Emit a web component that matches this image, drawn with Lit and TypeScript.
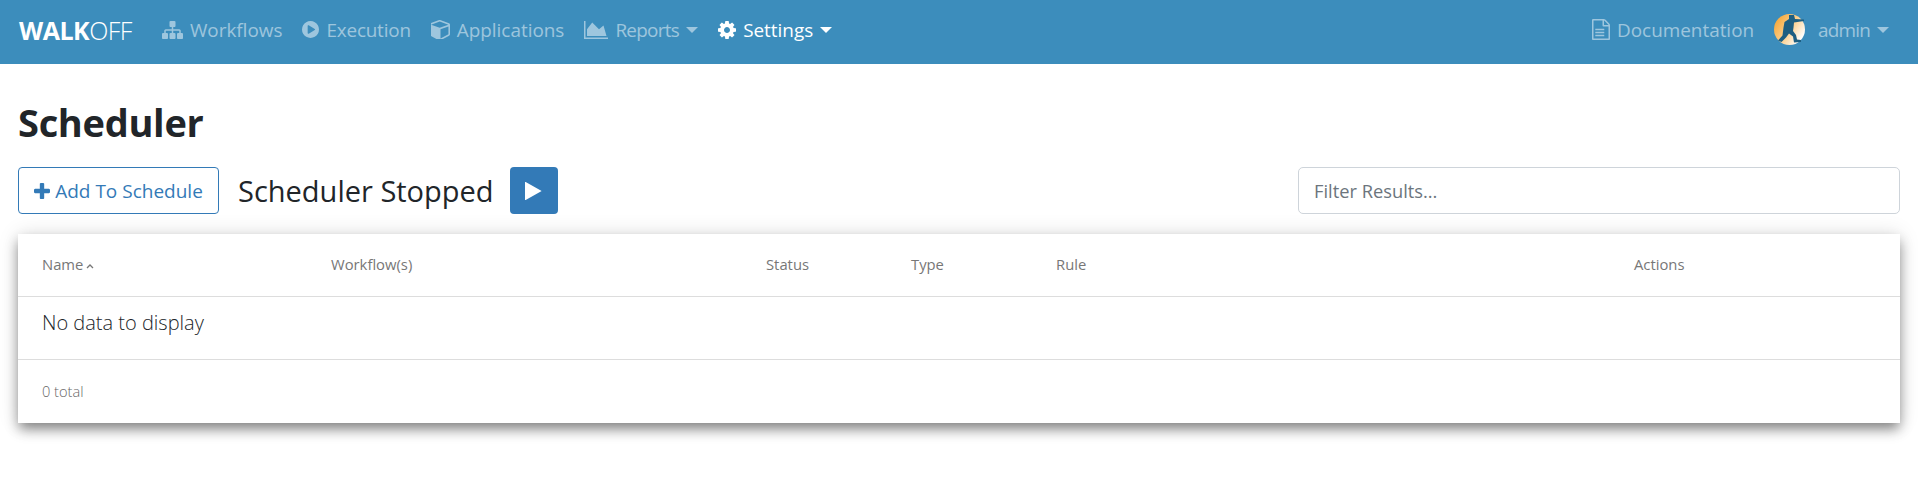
import { LitElement, css, html, svg } from 'lit'
import { customElement } from 'lit/decorators.js'

// viewBox is cropped to the glyph so the css height gives the drawn size
const icon = (box: string, d: string, height: number) => html`<svg class="ico" viewBox=${box} style="height:${height}px" fill="currentColor"><path d=${d}></path></svg>`

const sitemap = 'M1792 1248v320q0 40-28 68t-68 28h-320q-40 0-68-28t-28-68v-320q0-40 28-68t68-28h96v-192h-512v192h96q40 0 68 28t28 68v320q0 40-28 68t-68 28h-320q-40 0-68-28t-28-68v-320q0-40 28-68t68-28h96v-192h-512v192h96q40 0 68 28t28 68v320q0 40-28 68t-68 28h-320q-40 0-68-28t-28-68v-320q0-40 28-68t68-28h96v-192q0-52 38-90t90-38h512v-192h-96q-40 0-68-28t-28-68v-320q0-40 28-68t68-28h320q40 0 68 28t28 68v320q0 40-28 68t-68 28h-96v192h512q52 0 90 38t38 90v192h96q40 0 68 28t28 68z'
const playCircle = 'M896 128q209 0 385.5 103t279.5 279.5 103 385.5-103 385.5-279.5 279.5-385.5 103-385.5-103-279.5-279.5-103-385.5 103-385.5 279.5-279.5 385.5-103zm384 823q32-18 32-55t-32-55l-544-320q-31-19-64-1-32 19-32 56v640q0 37 32 56 16 8 32 8 17 0 32-9z'
const cube = 'M896 1629l640-349v-636l-640 233v752zm-64-865l698-254-698-254-698 254zm832-252v768q0 35-18 65t-49 47l-704 384q-28 16-61 16t-61-16l-704-384q-31-17-49-47t-18-65v-768q0-40 23-73t61-47l704-256q22-8 44-8t44 8l704 256q38 14 61 47t23 73z'
const areaChart = 'M2048 1536v128h-2048v-1536h128v1408h1920zm-384-1024l256 896h-1664v-576l448-576 576 576z'
const cog = 'M1152 896q0-106-75-181t-181-75-181 75-75 181 75 181 181 75 181-75 75-181zm512-109v222q0 12-8 23t-20 13l-185 28q-19 54-39 91 35 50 107 138 10 12 10 25t-9 23q-27 37-99 108t-94 71q-12 0-26-9l-138-108q-44 23-91 38-16 136-29 186-7 28-36 28h-222q-14 0-24.500-8.500t-11.500-21.500l-28-184q-49-16-90-37l-141 107q-10 9-25 9-14 0-25-11-126-114-165-168-7-10-7-23 0-12 8-23 15-21 51-66.500t54-70.500q-27-50-41-99l-183-27q-13-2-21-12.500t-8-23.500v-222q0-12 8-23t19-13l186-28q14-46 39-92-40-57-107-138-10-12-10-24 0-10 9-23 26-36 98.500-107.500t94.500-71.500q13 0 26 10l138 107q44-23 91-38 16-136 29-186 7-28 36-28h222q14 0 24.500 8.500t11.500 21.500l28 184q49 16 90 37l142-107q9-9 24-9 13 0 25 10 129 119 165 170 7 8 7 22 0 12-8 23-15 21-51 66.500t-54 70.500q26 50 41 98l183 28q13 2 21 12.500t8 23.500z'
const fileText = 'M1596 380q28 28 48 76t20 88v1152q0 40-28 68t-68 28h-1344q-40 0-68-28t-28-68v-1600q0-40 28-68t68-28h896q40 0 88 20t76 48zm-444-244v376h376q-10-29-22-41l-313-313q-12-12-41-22zm384 1528v-1024h-416q-40 0-68-28t-28-68v-416h-768v1536h1280zm-1128-800q0-14 9-23t23-9h704q14 0 23 9t9 23v64q0 14-9 23t-23 9h-704q-14 0-23-9t-9-23v-64zm736 224q14 0 23 9t9 23v64q0 14-9 23t-23 9h-704q-14 0-23-9t-9-23v-64q0-14 9-23t23-9h704zm0 256q14 0 23 9t9 23v64q0 14-9 23t-23 9h-704q-14 0-23-9t-9-23v-64q0-14 9-23t23-9h704z'
const plus = 'M1600 736v192q0 40-28 68t-68 28h-416v416q0 40-28 68t-68 28h-192q-40 0-68-28t-28-68v-416h-416q-40 0-68-28t-28-68v-192q0-40 28-68t68-28h416v-416q0-40 28-68t68-28h192q40 0 68 28t28 68v416h416q40 0 68 28t28 68z'
const play = 'M1576 927l-1328 738q-23 13-39.500 3t-16.500-36v-1472q0-26 16.500-36t39.500 3l1328 738q23 13 23 31t-23 31z'

const avatar = html`<svg class="avatar" viewBox="0 0 31 31">
  <defs>
    <linearGradient id="sky" x1="0.05" y1="0.2" x2="0.95" y2="0.8">
      <stop offset="0" stop-color="#f6a93b"></stop>
      <stop offset="0.5" stop-color="#fcd08f"></stop>
      <stop offset="0.95" stop-color="#ffffff"></stop>
    </linearGradient>
  </defs>
  <circle cx="15.5" cy="15.5" r="15.5" fill="url(#sky)"></circle>
  ${svg`<path fill="#1e5f82" d="M15 1l5 0 1 4 9 .5 0 1.500-10 1.500-.5 5-.5 3.500 3 4 1 4.500 4 .5 0 2-7 .5-1-6-4-3-3 4-4.500 4.500-3.500-1.500 4.500-5 1-8 1-5.500 4.500-3z"></path>`}
</svg>`

@customElement('app-root')
export class AppRoot extends LitElement {
  static styles = css`
  :host {
    display: block;
    font-family: 'Open Sans', 'Noto Sans', sans-serif;
    color: #212529;
  }

  .navbar {
    display: flex;
    align-items: center;
    height: 64px;
    box-sizing: border-box;
    padding: 0 29px 5px 19px;
    background: #3c8dbc;
    font-size: 18.9px;
  }

  .brand {
    color: #fff;
    font-size: 25px;
    margin-right: 30px;
    letter-spacing: -0.5px;
  }

  .brand b {
    font-weight: 700;
  }

  .brand span {
    font-weight: 300;
  }

  .nav-link {
    display: flex;
    align-items: center;
    gap: 7px;
    margin-right: 20px;
    color: rgba(255, 255, 255, .5);
    white-space: nowrap;
  }

  .nav-link.execution {
    letter-spacing: -0.2px;
  }

  .nav-link.reports {
    letter-spacing: -0.7px;
  }

  .nav-link.user {
    margin-right: 0;
    letter-spacing: -0.8px;
  }

  .nav-link.active {
    color: #fff;
  }

  .ico {
    display: block;
    width: auto;
    flex: none;
  }

  .caret {
    width: 0;
    height: 0;
    border-top: 6px solid currentColor;
    border-left: 6px solid transparent;
    border-right: 6px solid transparent;
  }

  .spacer {
    flex: 1;
  }

  .avatar {
    width: 31px;
    height: 31px;
    display: block;
    margin-right: 6px;
    margin-top: -1px;
  }

  .page {
    padding: 0 18px 69px;
  }

  h1 {
    margin: 0;
    padding-top: 32px;
    font-size: 38px;
    line-height: 52px;
    font-weight: 700;
    letter-spacing: -0.3px;
  }

  .toolbar {
    display: flex;
    align-items: center;
    margin-top: 19px;
    height: 47px;
  }

  .add-btn {
    display: flex;
    align-items: center;
    justify-content: center;
    gap: 5px;
    width: 201px;
    height: 47px;
    box-sizing: border-box;
    border: 1px solid #337ab7;
    border-radius: 4px;
    background: #fff;
    color: #337ab7;
    font: inherit;
    font-size: 19px;
    padding: 0;
  }

  .status {
    margin-left: 19px;
    font-size: 29px;
  }

  .play-btn {
    display: flex;
    align-items: center;
    justify-content: center;
    width: 48px;
    height: 47px;
    margin-left: 16px;
    border: 0;
    padding: 0;
    border-radius: 4px;
    background: #337ab7;
    color: #fff;
  }

  .filter {
    margin-left: auto;
    width: 602px;
    height: 47px;
    box-sizing: border-box;
    border: 1px solid #ced4da;
    border-radius: 5px;
    padding: 0 15px;
    font: inherit;
    font-size: 18.3px;
    color: #495057;
  }

  .filter::placeholder {
    color: #6c757d;
    opacity: 1;
  }

  .card {
    margin-top: 20px;
    background: #fff;
    box-shadow: 0 7px 12px -1px rgba(0, 0, 0, .45), 0 0 20px rgba(0, 0, 0, .12);
  }

  .cols {
    display: grid;
    grid-template-columns: 289px 435px 145px 145px 578px 1fr;
    align-items: center;
    padding: 0 0 2px 24px;
    box-sizing: border-box;
    height: 63px;
    border-bottom: 1px solid #ddd;
    font-size: 14.8px;
    color: #777;
  }

  .sort {
    display: inline-block;
    width: 8px;
    height: 6px;
    margin-left: 3px;
    vertical-align: 1px;
  }

  .empty {
    height: 62px;
    padding-left: 24px;
    border-bottom: 1px solid #ddd;
    font-size: 20px;
    line-height: 52px;
    font-weight: 300;
    color: #212529;
  }

  .foot {
    display: flex;
    align-items: center;
    height: 61px;
    padding: 0 0 2px 24px;
    font-size: 14.6px;
    font-weight: 300;
    color: #666;
  }
  `

  render() {
    return html`
      <nav class="navbar">
        <div class="brand"><b>WALK</b><span>OFF</span></div>
        <a class="nav-link">${icon('0 128 1792 1536', sitemap, 18)}Workflows</a>
        <a class="nav-link execution">${icon('128 128 1536 1536', playCircle, 17)}Execution</a>
        <a class="nav-link">${icon('128 128 1536 1536', cube, 19)}Applications</a>
        <a class="nav-link reports">${icon('0 128 2048 1536', areaChart, 18)}Reports<span class="caret"></span></a>
        <a class="nav-link active">${icon('128 128 1536 1536', cog, 18)}Settings<span class="caret"></span></a>
        <div class="spacer"></div>
        <a class="nav-link">${icon('128 0 1536 1792', fileText, 21)}Documentation</a>
        <a class="nav-link user">${avatar}admin<span class="caret"></span></a>
      </nav>
      <div class="page">
        <h1>Scheduler</h1>
        <div class="toolbar">
          <button class="add-btn">${icon('192 128 1408 1408', plus, 16)}Add To Schedule</button>
          <span class="status">Scheduler Stopped</span>
          <button class="play-btn">${icon('192 128 1408 1536', play, 18)}</button>
          <input class="filter" placeholder="Filter Results..." />
        </div>
        <section class="card">
          <div class="cols">
            <div>Name<svg class="sort" viewBox="0 0 8 6"><path d="M1 5l3-3 3 3" fill="none" stroke="#777" stroke-width="1.3"></path></svg></div>
            <div>Workflow(s)</div>
            <div>Status</div>
            <div>Type</div>
            <div>Rule</div>
            <div>Actions</div>
          </div>
          <div class="empty">No data to display</div>
          <div class="foot">0 total</div>
        </section>
      </div>
    `
  }
}
